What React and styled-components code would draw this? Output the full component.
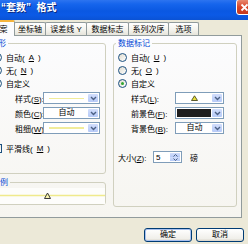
import React from 'react'
import styled, { createGlobalStyle } from 'styled-components'

const GlobalStyle = createGlobalStyle`
  html, body {
    margin: 0;
    padding: 0;
    overflow: hidden;
    background: #ece9d8;
  }
  body {
    font-family: "Liberation Sans", "Noto Sans CJK SC", sans-serif;
    font-size: 8px;
    color: #000;
  }
`

const Window = styled.div`
  width: 266px;
  height: 244px;
  margin-left: -18px;
  display: flex;
  flex-direction: column;
  background: #ece9d8;
`

const TitleBar = styled.div`
  height: 20px;
  flex: none;
  display: flex;
  align-items: flex-start;
  padding-left: 19px;
  overflow: hidden;
  background: linear-gradient(to bottom, #2c74f0 0%, #1665ec 20%, #0a58e2 55%, #0b5ae6 75%, #0a52d4 100%);
`

const TitleText = styled.div`
  margin-top: 1px;
  color: #fff;
  font-size: 10px;
  font-weight: bold;
  line-height: 13px;
  white-space: pre;
  text-shadow: 1px 1px 0 #0a2a80;
`

const CloseButton = styled.div`
  margin-left: auto;
  margin-right: -5px;
  margin-top: -1px;
  width: 17px;
  height: 16px;
  box-sizing: border-box;
  border: 1px solid #fff;
  border-radius: 3px;
  background: linear-gradient(to bottom, #e88a70, #d9462a 50%, #c4381c);
  display: flex;
  align-items: center;
  justify-content: center;
`

const Body = styled.div`
  display: flex;
  flex-direction: column;
  padding: 0 6px 0 2px;
`

const TabStrip = styled.div`
  height: 15px;
  display: flex;
  align-items: flex-end;
  position: relative;
  z-index: 1;
`

const Tab = styled.div`
  width: ${p => p.w}px;
  height: ${p => (p.active ? 16 : 13)}px;
  margin-bottom: ${p => (p.active ? -1 : 0)}px;
  margin-left: -1px;
  box-sizing: border-box;
  border: 1px solid #919b9c;
  border-bottom: none;
  border-top: ${p => (p.active ? '2px solid #f5b43c' : '1px solid #919b9c')};
  border-radius: 2px 2px 0 0;
  background: ${p => (p.active ? '#fcfcfe' : 'linear-gradient(to bottom, #ffffff, #f3f2ec 60%, #e6e4db)')};
  display: flex;
  align-items: center;
  justify-content: center;
  line-height: 11px;
  white-space: pre;
  &:first-child { margin-left: 0; }
`

const Panel = styled.div`
  height: 183px;
  box-sizing: border-box;
  border: 1px solid #919b9c;
  background: linear-gradient(to bottom, #fcfcfe, #f6f5f0);
  padding: 2px 4px 0 0;
  display: grid;
  grid-template-columns: 121px 124px;
  column-gap: 7px;
  align-items: start;
`

const Column = styled.div`
  display: flex;
  flex-direction: column;
`

const Group = styled.fieldset`
  margin: ${p => p.mt || 0}px 0 0;
  padding: 0;
  min-width: 0;
  border: 1px solid #d0d0bf;
  border-radius: 3px;
`

const Legend = styled.legend`
  margin-left: ${p => p.ml}px;
  padding: 0 2px;
  color: #0046d5;
  line-height: 11px;
`

const GroupContent = styled.div`
  display: flex;
  flex-direction: column;
  padding: ${p => p.pad};
`

const OptionRow = styled.div`
  height: 13px;
  display: flex;
  align-items: center;
  gap: 4px;
  white-space: pre;
  margin-top: ${p => p.mt || 0}px;
`

const Radio = styled.span`
  flex: none;
  width: 9px;
  height: 9px;
  box-sizing: border-box;
  border: 1px solid #1c5180;
  border-radius: 50%;
  background: linear-gradient(135deg, #dcd9cd, #ffffff);
  display: flex;
  align-items: center;
  justify-content: center;
  &::after {
    content: '';
    display: ${p => (p.checked ? 'block' : 'none')};
    width: 3px;
    height: 3px;
    border-radius: 50%;
    background: #2fa62f;
  }
`

const Check = styled.span`
  flex: none;
  width: 9px;
  height: 9px;
  box-sizing: border-box;
  border: 1px solid #1c5180;
  background: linear-gradient(135deg, #dcd9cd, #ffffff);
`

const Fields = styled.div`
  display: flex;
  flex-direction: column;
  gap: 3px;
  margin-top: 2px;
  padding-left: ${p => p.indent}px;
`

const FieldRow = styled.div`
  height: 12px;
  display: flex;
  align-items: center;
  margin-top: ${p => p.mt || 0}px;
`

const FieldLabel = styled.span`
  width: ${p => p.w}px;
  flex: none;
  white-space: pre;
`

const Select = styled.div`
  width: ${p => p.w}px;
  height: 12px;
  box-sizing: border-box;
  border: 1px solid #7f9db9;
  background: #fff;
  padding: 1px;
  display: flex;
`

const SelectValue = styled.div`
  flex: 1;
  display: flex;
  align-items: center;
  justify-content: center;
  line-height: 10px;
`

const Swatch = styled.div`
  align-self: stretch;
  flex: 1;
  margin-right: 1px;
  background: #1e1e1e;
`

const LineSample = styled.div`
  width: ${p => p.w}px;
  height: ${p => p.h}px;
  background: #f1ec9a;
`

const ArrowButton = styled.div`
  width: 10px;
  flex: none;
  border-radius: 1px;
  background: linear-gradient(to bottom, #d2defc, #b6caf7);
  display: flex;
  align-items: center;
  justify-content: center;
`

const Spin = styled.div`
  width: 29px;
  height: 12px;
  box-sizing: border-box;
  border: 1px solid #7f9db9;
  background: #fff;
  padding: 1px;
  display: flex;
`

const SpinValue = styled.div`
  flex: 1;
  padding-left: 1px;
  line-height: 10px;
`

const SpinButtons = styled.div`
  width: 10px;
  display: flex;
  flex-direction: column;
`

const SpinHalf = styled.div`
  flex: 1;
  background: linear-gradient(to bottom, #d2defc, #b6caf7);
  display: flex;
  align-items: center;
  justify-content: center;
`

const Unit = styled.span`
  margin-left: 8px;
`

const Preview = styled.div`
  height: 16px;
  background: #fdfdfb;
`

const Footer = styled.div`
  display: flex;
  justify-content: flex-end;
  gap: 4px;
  margin-top: 10px;
  margin-right: -2px;
`

const Button = styled.div`
  width: 48px;
  height: 14px;
  box-sizing: border-box;
  border: 1px solid #003c74;
  border-radius: 3px;
  background: linear-gradient(to bottom, #ffffff, #f0efea 80%, #d8d3c7);
  box-shadow: ${p => (p.primary ? 'inset 0 0 0 1px #a9c1ef' : 'none')};
  display: flex;
  align-items: center;
  justify-content: center;
  line-height: 12px;
`

const U = styled.span`
  text-decoration: underline;
`

function Chevron() {
  return (
    <svg width="7" height="5" viewBox="0 0 7 5">
      <path d="M1 1 L3.5 3.5 L6 1" fill="none" stroke="#4d6185" strokeWidth="1.4" />
    </svg>
  )
}

function SpinArrow({ up }) {
  return (
    <svg width="5" height="3" viewBox="0 0 5 3">
      <path d={up ? 'M0.5 2.5 L2.5 0.5 L4.5 2.5' : 'M0.5 0.5 L2.5 2.5 L4.5 0.5'} fill="none" stroke="#4d6185" strokeWidth="1" />
    </svg>
  )
}

function Dropdown({ w, children }) {
  return (
    <Select w={w}>
      {children}
      <ArrowButton><Chevron /></ArrowButton>
    </Select>
  )
}

function Label({ text, k, w }) {
  return (
    <FieldLabel w={w}>{text}(<U>{k}</U>):</FieldLabel>
  )
}

export default function App() {
  return (
    <>
      <GlobalStyle />
      <Window>
        <TitleBar>
          <TitleText>“套数”  格式</TitleText>
          <CloseButton>
            <svg width="9" height="9" viewBox="0 0 9 9">
              <path d="M1.5 1.5 L7.5 7.5 M7.5 1.5 L1.5 7.5" stroke="#fff" strokeWidth="1.8" />
            </svg>
          </CloseButton>
        </TitleBar>
        <Body>
          <TabStrip>
            <Tab w={31} active>图案</Tab>
            <Tab w={32}>坐标轴</Tab>
            <Tab w={42}>误差线 Y</Tab>
            <Tab w={43}>数据标志</Tab>
            <Tab w={41}>系列次序</Tab>
            <Tab w={31}>选项</Tab>
          </TabStrip>
          <Panel>
            <Column>
              <Group>
                <Legend ml={2}>线形</Legend>
                <GroupContent pad="2px 5px 18px 7px">
                  <OptionRow><Radio />自动(<U>A</U>)</OptionRow>
                  <OptionRow><Radio />无(<U>N</U>)</OptionRow>
                  <OptionRow><Radio checked />自定义</OptionRow>
                  <Fields indent={22}>
                    <FieldRow>
                      <Label text="样式" k="S" w={28} />
                      <Dropdown w={57}>
                        <SelectValue><LineSample w={35} h={1} /></SelectValue>
                      </Dropdown>
                    </FieldRow>
                    <FieldRow>
                      <Label text="颜色" k="C" w={28} />
                      <Dropdown w={57}>
                        <SelectValue>自动</SelectValue>
                      </Dropdown>
                    </FieldRow>
                    <FieldRow>
                      <Label text="粗细" k="W" w={28} />
                      <Dropdown w={57}>
                        <SelectValue><LineSample w={35} h={2} /></SelectValue>
                      </Dropdown>
                    </FieldRow>
                  </Fields>
                  <OptionRow mt={8}><Check />平滑线(<U>M</U>)</OptionRow>
                </GroupContent>
              </Group>
              <Group mt={3}>
                <Legend ml={4}>示例</Legend>
                <Preview>
                  <svg width="119" height="16" viewBox="0 0 119 16">
                    <line x1="0" y1="7.5" x2="119" y2="7.5" stroke="#f0ea8c" strokeWidth="1.5" />
                    <path d="M58.5 10.5 L61.5 5 L64.5 10.5 Z" fill="#fbf7b0" stroke="#3a3a3a" strokeWidth="1" />
                  </svg>
                </Preview>
              </Group>
            </Column>
            <Group>
              <Legend ml={2}>数据标记</Legend>
              <GroupContent pad="2px 12px 43px 4px">
                <OptionRow><Radio />自动(<U>U</U>)</OptionRow>
                <OptionRow><Radio />无(<U>O</U>)</OptionRow>
                <OptionRow><Radio checked />自定义</OptionRow>
                <Fields indent={13}>
                  <FieldRow>
                    <Label text="样式" k="L" w={44} />
                    <Dropdown w={49}>
                      <SelectValue>
                        <svg width="7" height="6" viewBox="0 0 7 6">
                          <path d="M0.5 5.5 L3.5 0.8 L6.5 5.5 Z" fill="#e8e03a" stroke="#4a4a20" strokeWidth="0.9" />
                        </svg>
                      </SelectValue>
                    </Dropdown>
                  </FieldRow>
                  <FieldRow>
                    <Label text="前景色" k="F" w={44} />
                    <Dropdown w={49}>
                      <Swatch />
                    </Dropdown>
                  </FieldRow>
                  <FieldRow>
                    <Label text="背景色" k="B" w={44} />
                    <Dropdown w={49}>
                      <SelectValue>自动</SelectValue>
                    </Dropdown>
                  </FieldRow>
                </Fields>
                <FieldRow mt={17}>
                  <Label text="大小" k="Z" w={35} />
                  <Spin>
                    <SpinValue>5</SpinValue>
                    <SpinButtons>
                      <SpinHalf><SpinArrow up /></SpinHalf>
                      <SpinHalf><SpinArrow /></SpinHalf>
                    </SpinButtons>
                  </Spin>
                  <Unit>磅</Unit>
                </FieldRow>
              </GroupContent>
            </Group>
          </Panel>
          <Footer>
            <Button primary>确定</Button>
            <Button>取消</Button>
          </Footer>
        </Body>
      </Window>
    </>
  )
}
